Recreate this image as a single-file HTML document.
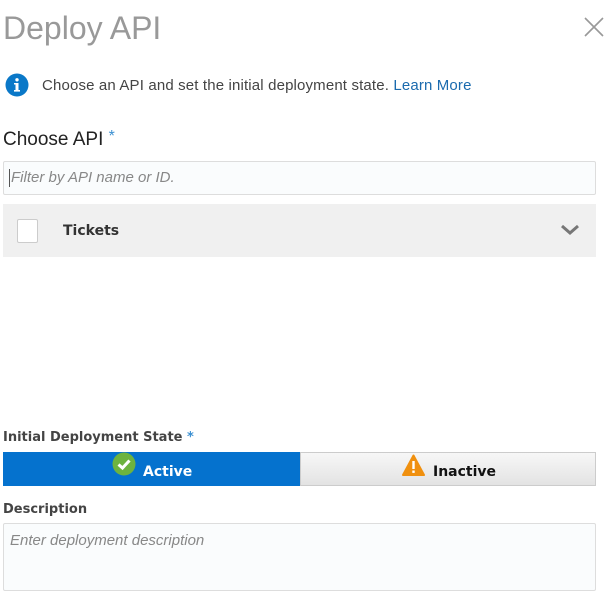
<!DOCTYPE html>
<html><head><style>
*{margin:0;padding:0;box-sizing:border-box}
body{width:610px;height:602px;background:#fff;position:relative;font-family:"Liberation Sans",sans-serif;overflow:hidden}
.a{position:absolute;white-space:nowrap}
.b{font-family:"DejaVu Sans",sans-serif;font-weight:bold;font-size:13px;color:#444}
.star{color:#3a8fd1}
</style></head><body>
<div class="a" style="left:3px;top:10px;font-size:32px;color:#999;letter-spacing:0px">Deploy API</div>
<svg class="a" style="left:584px;top:17px" width="20" height="20"><path d="M1 1L19 19M19 1L1 19" stroke="#999" stroke-width="1.6"/></svg>
<svg class="a" style="left:5px;top:73px" width="24" height="24"><circle cx="12" cy="12" r="11.5" fill="#0a78c8"/><rect x="10.5" y="10" width="3" height="8" fill="#fff"/><rect x="9" y="17" width="6" height="1.6" fill="#fff"/><rect x="9" y="10" width="3" height="1.5" fill="#fff"/><circle cx="12" cy="6.8" r="1.7" fill="#fff"/></svg>
<div class="a" style="left:42px;top:77px;font-size:15px;color:#444;letter-spacing:0.15px">Choose an API and set the initial deployment state. <span style="color:#1a6aae">Learn More</span></div>
<div class="a" style="left:3px;top:128px;font-size:19px;color:#222">Choose API <span class="star" style="font-size:16px;vertical-align:4px">*</span></div>
<div class="a" style="left:3px;top:161px;width:593px;height:34px;border:1px solid #ddd;border-radius:2px;background:#fafcfd"></div>
<div class="a" style="left:9px;top:169px;width:1px;height:18px;background:#555"></div>
<div class="a" style="left:11px;top:169px;font-size:15px;font-style:italic;color:#888">Filter by API name or ID.</div>
<div class="a" style="left:3px;top:204px;width:593px;height:53px;background:#f0f0f0"></div>
<div class="a" style="left:17px;top:219px;width:21px;height:24px;background:#fff;border:1px solid #ccc;border-radius:2px"></div>
<div class="a b" style="left:63px;top:223px;color:#333;font-size:14px">Tickets</div>
<svg class="a" style="left:560px;top:224px" width="20" height="12"><path d="M2 2L10 9L18 2" stroke="#777" stroke-width="3" fill="none"/></svg>
<div class="a b" style="left:3px;top:430px">Initial Deployment State <span class="star">*</span></div>
<div class="a" style="left:3px;top:452px;width:297px;height:34px;background:#0572ce"></div>
<div class="a" style="left:300px;top:452px;width:296px;height:34px;background:linear-gradient(#f7f7f7,#e3e3e3);border:1px solid #ccc"></div>
<svg class="a" style="left:112px;top:452px" width="24" height="24"><circle cx="12" cy="12" r="11.5" fill="#6db33f"/><path d="M6.5 12.5L10.5 16L17.5 8.5" stroke="#fff" stroke-width="3" fill="none"/></svg>
<div class="a b" style="left:143px;top:464px;color:#fff;font-size:14px">Active</div>
<svg class="a" style="left:402px;top:454px" width="23" height="22"><path d="M11.5 1.5L22 21H1Z" fill="#f0900f" stroke="#f0900f" stroke-width="2" stroke-linejoin="round"/><rect x="10.3" y="7" width="2.4" height="8" fill="#fff"/><rect x="10.3" y="16.5" width="2.4" height="2.4" fill="#fff"/></svg>
<div class="a b" style="left:433px;top:464px;color:#111;font-size:14px">Inactive</div>
<div class="a b" style="left:3px;top:502px">Description</div>
<div class="a" style="left:3px;top:523px;width:593px;height:68px;border:1px solid #ddd;border-radius:2px;background:#fafcfd"></div>
<div class="a" style="left:10px;top:532px;font-size:15px;font-style:italic;color:#888">Enter deployment description</div>
</body></html>
